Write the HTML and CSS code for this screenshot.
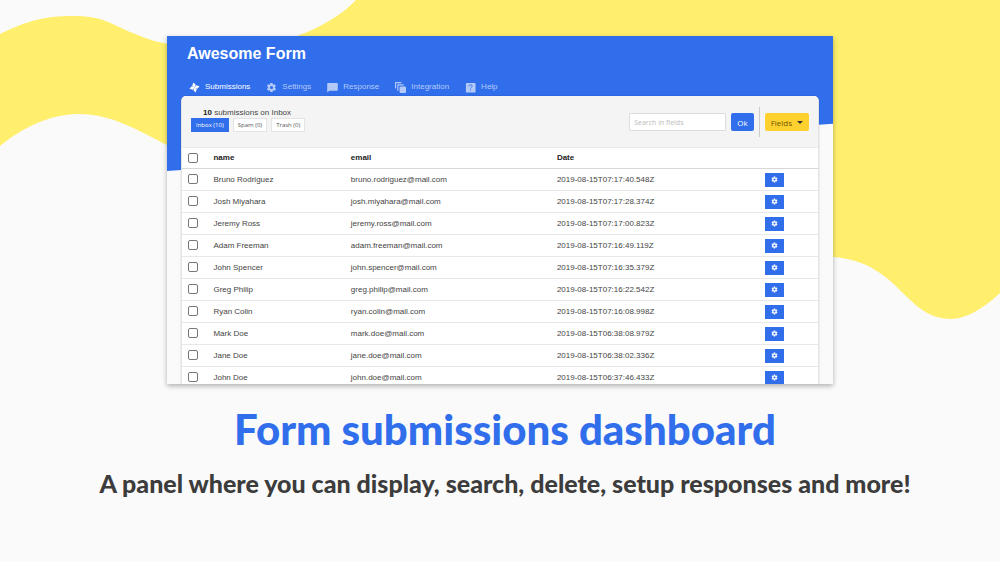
FILE: index.html
```
<!DOCTYPE html>
<html lang="en">
<head>
    <meta charset="UTF-8">
    <meta name="viewport" content="width=device-width, initial-scale=1.0">
    <title>Form submissions dashboard</title>
    <link rel="stylesheet" href="styles.css">
</head>
<body>

    <!-- icons -->
    <svg class="sprite" aria-hidden="true">
        <symbol id="icon-gear" viewBox="0 0 24 24">
            <path d="M19.4 13c0-.3.1-.6.1-1s0-.7-.1-1l2.1-1.700c.2-.1.2-.4.1-.6l-2-3.500c-.1-.2-.4-.3-.6-.2l-2.500 1c-.5-.4-1.100-.7-1.700-1l-.4-2.600c0-.2-.2-.4-.5-.4h-4c-.2 0-.5.2-.5.4L9 5c-.6.3-1.200.6-1.700 1l-2.500-1c-.2-.1-.5 0-.6.2l-2 3.500c-.1.2-.1.500.1.6L4.500 11c0 .3-.1.6-.1 1s0 .7.1 1l-2.200 1.700c-.2.1-.2.4-.1.6l2 3.500c.1.2.4.3.6.2l2.500-1c.5.4 1.100.7 1.700 1l.4 2.600c0 .2.3.4.5.4h4c.3 0 .5-.2.5-.4L15 19c.6-.3 1.200-.6 1.700-1l2.500 1c.2.1.500 0 .6-.2l2-3.500c.1-.2.1-.5-.1-.6L19.400 13zM12 15.500a3.500 3.500 0 1 1 0-7 3.500 3.500 0 0 1 0 7z"/>
        </symbol>
        <symbol id="icon-fan" viewBox="0 0 24 24">
            <path d="M13 12L7 8.500L9.500 1L14.500 6Z"/>
            <path d="M12 13L15.500 7L23 9.500L18 14.500Z"/>
            <path d="M11 12L17 15.500L14.500 23L9.500 18Z"/>
            <path d="M12 11L8.500 17L1 14.500L6 9.500Z"/>
        </symbol>
        <symbol id="icon-chat" viewBox="0 0 24 24">
            <path d="M22 2H2C1 2 .5 2.500.5 3.500V23L5 19h17c1 0 1.500-.5 1.500-1.500v-14C23.500 2.500 23 2 22 2z"/>
        </symbol>
        <symbol id="icon-copies" viewBox="0 0 24 24">
            <path d="M0 14V2c0-1.100.9-2 2-2h12v2.500H2.500V14z"/>
            <path d="M5 19V7c0-1.100.9-2 2-2h12v2.500H7.500V19z"/>
            <rect x="10" y="10" width="14" height="14" rx="2"/>
        </symbol>
        <symbol id="icon-help" viewBox="0 0 24 24">
            <rect x="2" y="2" width="21" height="21" rx="2"/>
            <path class="icon-mark" d="M8.500 9.500c0-2.300 1.500-3.500 3.500-3.500s3.500 1.300 3.500 3.200c0 2.300-3.500 2.600-3.500 5.300M12 16.500v2.200"/>
        </symbol>
    </svg>

    <svg class="waves" viewBox="0 0 1000 562" preserveAspectRatio="none" aria-hidden="true">
        <path d="M0 34C28 20 48 16 72 16C104 16 108 23 135 34C150 40 160 43 170 44C220 50 275 50 297 36C320 28 343 14 356 0H1000V293C984 308 966 319 951 319C905 319 900 262 833 257C600 250 300 205 167 145C137 130 112 114 78 114C50 114 22 128 0 146Z"/>
    </svg>

    <main class="page">
        <section class="panel">
            <header class="header">
                <h2>Awesome Form</h2>
                <nav class="tabs">
                    <a href="#" class="tab active"><svg><use href="#icon-fan"/></svg>Submissions</a>
                    <a href="#" class="tab"><svg><use href="#icon-gear"/></svg>Settings</a>
                    <a href="#" class="tab"><svg><use href="#icon-chat"/></svg>Response</a>
                    <a href="#" class="tab"><svg><use href="#icon-copies"/></svg>Integration</a>
                    <a href="#" class="tab"><svg><use href="#icon-help"/></svg>Help</a>
                </nav>
            </header>

            <div class="card">
                <div class="toolbar">
                    <div class="folders">
                        <p class="count"><b>10</b> submissions on Inbox</p>
                        <div class="folder-list">
                            <button class="folder active">Inbox (10)</button>
                            <button class="folder">Spam (0)</button>
                            <button class="folder">Trash (0)</button>
                        </div>
                    </div>
                    <form class="search">
                        <input type="text" class="search-input" placeholder="Search in fields" aria-label="Search in fields">
                        <button type="button" class="btn btn-ok">Ok</button>
                        <span class="divider"></span>
                        <button type="button" class="btn btn-fields">Fields <span class="caret"></span></button>
                    </form>
                </div>

                <table class="submissions">
                    <thead>
                        <tr>
                            <th class="col-check"><input type="checkbox" aria-label="Select all"></th>
                            <th class="col-name">name</th>
                            <th class="col-email">email</th>
                            <th class="col-date">Date</th>
                            <th class="col-action"></th>
                        </tr>
                    </thead>
                    <tbody>
                        <tr>
                            <td><input type="checkbox" aria-label="Select Bruno Rodriguez"></td>
                            <td>Bruno Rodriguez</td>
                            <td>bruno.rodriguez@mail.com</td>
                            <td>2019-08-15T07:17:40.548Z</td>
                            <td><button class="btn-row" aria-label="Options"><svg><use href="#icon-gear"/></svg></button></td>
                        </tr>
                        <tr>
                            <td><input type="checkbox" aria-label="Select Josh Miyahara"></td>
                            <td>Josh Miyahara</td>
                            <td>josh.miyahara@mail.com</td>
                            <td>2019-08-15T07:17:28.374Z</td>
                            <td><button class="btn-row" aria-label="Options"><svg><use href="#icon-gear"/></svg></button></td>
                        </tr>
                        <tr>
                            <td><input type="checkbox" aria-label="Select Jeremy Ross"></td>
                            <td>Jeremy Ross</td>
                            <td>jeremy.ross@mail.com</td>
                            <td>2019-08-15T07:17:00.823Z</td>
                            <td><button class="btn-row" aria-label="Options"><svg><use href="#icon-gear"/></svg></button></td>
                        </tr>
                        <tr>
                            <td><input type="checkbox" aria-label="Select Adam Freeman"></td>
                            <td>Adam Freeman</td>
                            <td>adam.freeman@mail.com</td>
                            <td>2019-08-15T07:16:49.119Z</td>
                            <td><button class="btn-row" aria-label="Options"><svg><use href="#icon-gear"/></svg></button></td>
                        </tr>
                        <tr>
                            <td><input type="checkbox" aria-label="Select John Spencer"></td>
                            <td>John Spencer</td>
                            <td>john.spencer@mail.com</td>
                            <td>2019-08-15T07:16:35.379Z</td>
                            <td><button class="btn-row" aria-label="Options"><svg><use href="#icon-gear"/></svg></button></td>
                        </tr>
                        <tr>
                            <td><input type="checkbox" aria-label="Select Greg Philip"></td>
                            <td>Greg Philip</td>
                            <td>greg.philip@mail.com</td>
                            <td>2019-08-15T07:16:22.542Z</td>
                            <td><button class="btn-row" aria-label="Options"><svg><use href="#icon-gear"/></svg></button></td>
                        </tr>
                        <tr>
                            <td><input type="checkbox" aria-label="Select Ryan Colin"></td>
                            <td>Ryan Colin</td>
                            <td>ryan.colin@mail.com</td>
                            <td>2019-08-15T07:16:08.998Z</td>
                            <td><button class="btn-row" aria-label="Options"><svg><use href="#icon-gear"/></svg></button></td>
                        </tr>
                        <tr>
                            <td><input type="checkbox" aria-label="Select Mark Doe"></td>
                            <td>Mark Doe</td>
                            <td>mark.doe@mail.com</td>
                            <td>2019-08-15T06:38:08.979Z</td>
                            <td><button class="btn-row" aria-label="Options"><svg><use href="#icon-gear"/></svg></button></td>
                        </tr>
                        <tr>
                            <td><input type="checkbox" aria-label="Select Jane Doe"></td>
                            <td>Jane Doe</td>
                            <td>jane.doe@mail.com</td>
                            <td>2019-08-15T06:38:02.336Z</td>
                            <td><button class="btn-row" aria-label="Options"><svg><use href="#icon-gear"/></svg></button></td>
                        </tr>
                        <tr>
                            <td><input type="checkbox" aria-label="Select John Doe"></td>
                            <td>John Doe</td>
                            <td>john.doe@mail.com</td>
                            <td>2019-08-15T06:37:46.433Z</td>
                            <td><button class="btn-row" aria-label="Options"><svg><use href="#icon-gear"/></svg></button></td>
                        </tr>
                    </tbody>
                </table>
            </div>
        </section>

        <div class="caption">
            <h1>Form submissions dashboard</h1>
            <p>A panel where you can display, search, delete, setup responses and more!</p>
        </div>
    </main>

</body>
</html>
```
FILE: styles.css
```
* {
    margin: 0;
    padding: 0;
    box-sizing: border-box;
}

body {
    min-height: 100vh;
    background: #fafafa;
    font-family: "Liberation Sans", Arial, sans-serif;
    font-size: 8px;
    color: #444;
    overflow: hidden;
}

.sprite {
    display: none;
}

.waves {
    position: absolute;
    top: 0;
    left: 0;
    width: 100%;
    height: 100%;
    fill: #ffef6c;
}

.page {
    position: relative;
    display: flex;
    flex-direction: column;
    align-items: center;
    padding-top: 36px;
}

/* dashboard window */
.panel {
    position: relative;
    width: 66.6%;
    height: 62vh;
    padding: 0 14px;
    background: #fafafa;
    box-shadow: 0 2px 5px rgba(0, 0, 0, 0.3);
    overflow: hidden;
}

.panel::before {
    content: "";
    position: absolute;
    top: 0;
    left: 0;
    width: 100%;
    height: 135px;
    background: #316eec;
    clip-path: polygon(0 0, 100% 0, 100% 65%, 0 100%);
}

.header {
    position: relative;
    padding: 8px 6px 0;
}

.header h2 {
    font-size: 16px;
    line-height: 20px;
    color: #fff;
}

.tabs {
    display: flex;
    gap: 16px;
    padding: 17px 2px 3px;
}

.tab {
    display: flex;
    align-items: center;
    gap: 5px;
    line-height: 12px;
    color: #b3caf8;
    text-decoration: none;
}

.tab svg {
    width: 11px;
    height: 11px;
    fill: currentColor;
}

.tab.active {
    color: #fff;
}

.icon-mark {
    fill: none;
    stroke: #316eec;
    stroke-width: 2;
}

.card {
    position: relative;
    background: #fff;
    border: 1px solid #e4e4e4;
    border-top: 0;
    border-radius: 5px 5px 0 0;
    box-shadow: 0 0 2px rgba(0, 0, 0, 0.2);
    overflow: hidden;
}

/* toolbar */
.toolbar {
    display: flex;
    justify-content: space-between;
    align-items: flex-start;
    padding: 11px 9px 10px;
    background: #f4f4f4;
    border-bottom: 1px solid #eaeaea;
}

.count {
    padding-left: 12px;
    line-height: 11px;
}

.count b {
    color: #222;
}

.folder-list {
    display: flex;
    gap: 4px;
}

.folder {
    height: 14px;
    padding: 0 4px;
    font-family: "Open Sans", sans-serif;
    font-size: 6px;
    color: #555;
    background: #fff;
    border: 1px solid #e4e4e4;
}

.folder.active {
    color: #fff;
    background: #316eec;
    border-color: #316eec;
}

.search {
    display: flex;
    align-items: center;
    gap: 5px;
}

.search-input {
    width: 97px;
    height: 18px;
    padding: 0 4px;
    font-family: "Open Sans", sans-serif;
    font-size: 7px;
    border: 1px solid #ddd;
    border-radius: 1px;
}

.search-input::placeholder {
    color: #bbb;
}

.btn {
    height: 18px;
    padding: 0 6px;
    font-family: "Open Sans", sans-serif;
    font-size: 8px;
    border: 0;
    border-radius: 2px;
}

.btn-ok {
    color: #fff;
    background: #316eec;
}

.divider {
    width: 1px;
    height: 30px;
    background: #ccc;
}

.btn-fields {
    display: flex;
    align-items: center;
    gap: 5px;
    color: #6b5500;
    background: #ffd12f;
}

.caret {
    border: 3px solid transparent;
    border-top-color: #333;
    border-bottom: 0;
}

/* table */
.submissions {
    width: 100%;
    table-layout: fixed;
    border-collapse: separate;
    border-spacing: 0;
}

.submissions th,
.submissions td {
    height: 22px;
    padding: 0 0 1px 6px;
    text-align: left;
    vertical-align: middle;
    border-bottom: 1px solid #e8e8e8;
}

.submissions th {
    height: 21px;
    color: #222;
    border-bottom-color: #d8d8d8;
}

.submissions td:last-child {
    padding-bottom: 0;
}

.col-check {
    width: 4%;
}

.col-name {
    width: 21.6%;
}

.col-email {
    width: 32.4%;
}

.col-date {
    width: 32.7%;
}

.submissions input {
    display: block;
    width: 10px;
    height: 10px;
    appearance: none;
    background: #fff;
    border: 1px solid #777;
    border-radius: 2px;
}

.btn-row {
    display: flex;
    align-items: center;
    justify-content: center;
    width: 19px;
    height: 14px;
    background: #316eec;
    border: 0;
}

.btn-row svg {
    width: 7px;
    height: 7px;
    fill: #fff;
}

/* caption */
.caption {
    padding: 20px 0 0 10px;
    font-family: Lato, sans-serif;
    text-align: center;
}

.caption h1 {
    font-size: 42px;
    font-weight: 900;
    line-height: 50px;
    color: #316eec;
}

.caption p {
    margin-top: 14px;
    font-size: 25px;
    font-weight: 900;
    line-height: 30px;
    color: #3c3c3c;
}
```
